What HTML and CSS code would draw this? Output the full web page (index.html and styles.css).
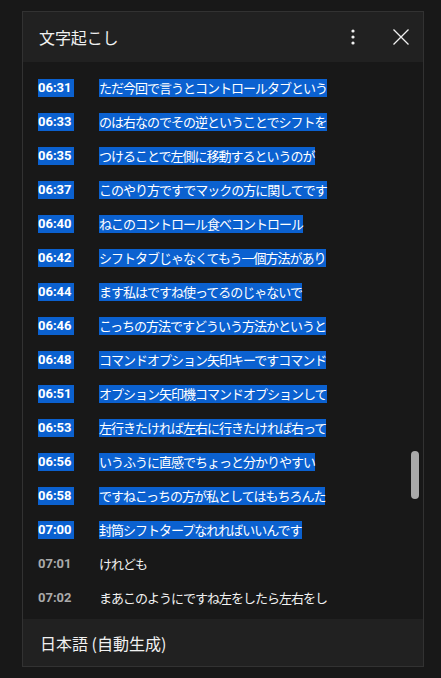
FILE: index.html
```html
<!DOCTYPE html>
<html lang="ja">
<head>
<meta charset="utf-8">
<title>文字起こし</title>
<link rel="stylesheet" href="styles.css">
</head>
<body>
<div class="panel">
  <div class="header">
    <div class="title">文字起こし</div>
    <div class="actions">
      <button class="icon-btn more" aria-label="その他">
        <svg width="4" height="16" viewBox="0 0 4 16"><circle cx="2" cy="2" r="1.6" fill="#f1f1f1"/><circle cx="2" cy="8" r="1.6" fill="#f1f1f1"/><circle cx="2" cy="14" r="1.6" fill="#f1f1f1"/></svg>
      </button>
      <button class="icon-btn close" aria-label="閉じる">
        <svg width="16" height="16" viewBox="0 0 16 16"><path d="M0.5 0.5 L15.5 15.5 M15.5 0.5 L0.5 15.5" stroke="#f1f1f1" stroke-width="1.3" fill="none"/></svg>
      </button>
    </div>
  </div>
  <div class="body">
    <div class="list">
      <div class="row sel"><span class="ts">06:31</span><span class="tx">ただ今回で言うとコントロールタブという</span></div>
      <div class="row sel"><span class="ts">06:33</span><span class="tx">のは右なのでその逆ということでシフトを</span></div>
      <div class="row sel"><span class="ts">06:35</span><span class="tx">つけることで左側に移動するというのが</span></div>
      <div class="row sel"><span class="ts">06:37</span><span class="tx">このやり方ですでマックの方に関してです</span></div>
      <div class="row sel"><span class="ts">06:40</span><span class="tx">ねこのコントロール食べコントロール</span></div>
      <div class="row sel"><span class="ts">06:42</span><span class="tx">シフトタブじゃなくてもう一個方法があり</span></div>
      <div class="row sel"><span class="ts">06:44</span><span class="tx">ます私はですね使ってるのじゃないで</span></div>
      <div class="row sel"><span class="ts">06:46</span><span class="tx">こっちの方法ですどういう方法かというと</span></div>
      <div class="row sel"><span class="ts">06:48</span><span class="tx">コマンドオプション矢印キーですコマンド</span></div>
      <div class="row sel"><span class="ts">06:51</span><span class="tx">オプション矢印機コマンドオプションして</span></div>
      <div class="row sel"><span class="ts">06:53</span><span class="tx">左行きたければ左右に行きたければ右って</span></div>
      <div class="row sel"><span class="ts">06:56</span><span class="tx">いうふうに直感でちょっと分かりやすい</span></div>
      <div class="row sel"><span class="ts">06:58</span><span class="tx">ですねこっちの方が私としてはもちろんた</span></div>
      <div class="row sel"><span class="ts">07:00</span><span class="tx">封筒シフトタープなれればいいんです</span></div>
      <div class="row"><span class="ts">07:01</span><span class="tx">けれども</span></div>
      <div class="row"><span class="ts">07:02</span><span class="tx">まあこのようにですね左をしたら左右をし</span></div>
    </div>
    <div class="scrollbar"></div>
  </div>
  <div class="footer">日本語 (自動生成)</div>
</div>
</body>
</html>
```

FILE: styles.css
```css
* { box-sizing: border-box; }
html, body {
  margin: 0;
  padding: 0;
  background: #181818;
  height: 100%;
}
body {
  font-family: Roboto, "Noto Sans CJK JP", sans-serif;
  color: #f1f1f1;
}
.panel {
  margin: 11px 0 0 22px;
  width: 402px;
  height: 656px;
  border: 1px solid #323232;
  background: #181818;
  display: flex;
  flex-direction: column;
}
.header {
  height: 50px;
  flex: none;
  background: #212121;
  display: flex;
  align-items: center;
  justify-content: space-between;
  padding: 0 14px 0 16px;
}
.title {
  font-family: "Noto Sans CJK JP", sans-serif;
  font-size: 16px;
  letter-spacing: -0.1px;
}
.actions {
  display: flex;
  align-items: center;
}
.icon-btn {
  background: none;
  border: 0;
  padding: 0;
  margin: 0;
  display: flex;
  align-items: center;
  justify-content: center;
}
.more { width: 4px; height: 16px; margin-right: 38px; }
.close { width: 16px; height: 16px; }
.body {
  flex: 1;
  position: relative;
  overflow: hidden;
}
.list {
  padding: 9px 0 0 15px;
}
.row {
  display: flex;
  align-items: center;
  height: 34px;
}
.ts, .tx { line-height: 18px; }
.ts {
  width: 36px;
  margin-right: 25px;
  flex: none;
  font-family: Roboto, sans-serif;
  font-weight: 700;
  font-size: 13px;
  color: #aaaaaa;
  white-space: nowrap;
}
.tx {
  font-family: "Noto Sans CJK JP", sans-serif;
  font-size: 13px;
  letter-spacing: -1px;
  color: #f1f1f1;
  white-space: nowrap;
}
.row.sel .ts, .row.sel .tx {
  background: #0b61d0;
  color: #ffffff;
}
.scrollbar {
  position: absolute;
  left: 388px;
  top: 389px;
  width: 8px;
  height: 48px;
  border-radius: 4px;
  background: #aaaaaa;
}
.footer {
  flex: none;
  height: 47px;
  background: #212121;
  font-family: "Noto Sans CJK JP", sans-serif;
  font-size: 16px;
  display: flex;
  align-items: center;
  padding-left: 17px;
}
```
